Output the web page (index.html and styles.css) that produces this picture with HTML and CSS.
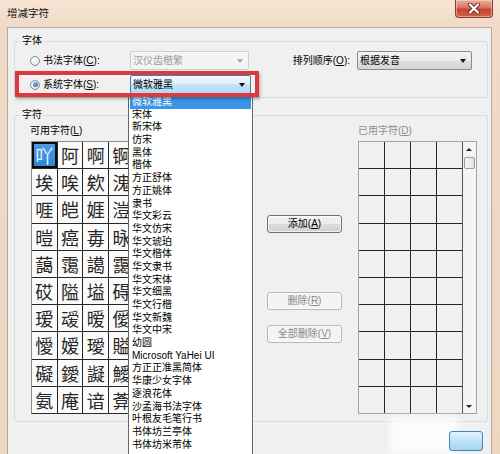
FILE: index.html
```html
<!DOCTYPE html>
<html lang="zh">
<head>
<meta charset="utf-8">
<title>增减字符</title>
<link rel="stylesheet" href="styles.css">
</head>
<body>
<div class="window">
  <div class="titlebar">
    <span class="title">增减字符</span>
    <span class="close">
      <svg width="14" height="11" viewBox="0 0 14 11">
        <path d="M3 1.5 L11 9.5 M11 1.5 L3 9.5" stroke="#6a2a1f" stroke-width="4" stroke-linecap="round"/>
        <path d="M3 1.5 L11 9.5 M11 1.5 L3 9.5" stroke="#ffffff" stroke-width="2.2" stroke-linecap="round"/>
      </svg>
    </span>
  </div>
  <div class="client">
    <fieldset class="group group-font">
      <legend>字体</legend>
      <div class="row">
        <label class="radio-label"><span class="radio"></span>书法字体(<u>C</u>):</label>
        <div class="combo combo-disabled"><span class="combo-text">汉仪齿楷繁</span><i class="arrow"></i></div>
        <div class="sort">
          <span>排列顺序(<u>O</u>):</span>
          <div class="combo combo-normal"><span class="combo-text">根据发音</span><i class="arrow"></i></div>
        </div>
      </div>
      <div class="row">
        <label class="radio-label"><span class="radio checked"></span>系统字体(<u>S</u>):</label>
        <div class="combo combo-focus"><span class="combo-text">微软雅黑</span><i class="arrow"></i></div>
      </div>
    </fieldset>

    <fieldset class="group group-chars">
      <legend>字符</legend>
      <div class="chars-body">
        <div class="panel panel-left">
          <div class="panel-label">可用字符(<u>L</u>)</div>
          <div class="grid grid-avail">
            <span class="cell sel">吖</span><span class="cell">阿</span><span class="cell">啊</span><span class="cell">锕</span>
            <span class="cell">埃</span><span class="cell">唉</span><span class="cell">欸</span><span class="cell">溾</span>
            <span class="cell">啀</span><span class="cell">皑</span><span class="cell">娾</span><span class="cell">溰</span>
            <span class="cell">暟</span><span class="cell">癌</span><span class="cell">毐</span><span class="cell">昹</span>
            <span class="cell">藹</span><span class="cell">霭</span><span class="cell">譪</span><span class="cell">靄</span>
            <span class="cell">砹</span><span class="cell">隘</span><span class="cell">塧</span><span class="cell">碍</span>
            <span class="cell">瑷</span><span class="cell">叆</span><span class="cell">暧</span><span class="cell">僾</span>
            <span class="cell">懓</span><span class="cell">嫒</span><span class="cell">璦</span><span class="cell">賹</span>
            <span class="cell">礙</span><span class="cell">鑀</span><span class="cell">譺</span><span class="cell">鱫</span>
            <span class="cell">氨</span><span class="cell">庵</span><span class="cell">谙</span><span class="cell">葊</span>
          </div>
        </div>

        <div class="buttons">
          <button class="btn btn-add">添加(<u>A</u>)</button>
          <button class="btn btn-del" disabled>删除(<u>R</u>)</button>
          <button class="btn btn-delall" disabled>全部删除(<u>V</u>)</button>
        </div>

        <div class="panel panel-right">
          <div class="panel-label muted">已用字符(<u>D</u>)</div>
          <div class="grid-box">
            <div class="grid grid-used">
              <span class="cell"></span><span class="cell"></span><span class="cell"></span><span class="cell"></span>
              <span class="cell"></span><span class="cell"></span><span class="cell"></span><span class="cell"></span>
              <span class="cell"></span><span class="cell"></span><span class="cell"></span><span class="cell"></span>
              <span class="cell"></span><span class="cell"></span><span class="cell"></span><span class="cell"></span>
              <span class="cell"></span><span class="cell"></span><span class="cell"></span><span class="cell"></span>
              <span class="cell"></span><span class="cell"></span><span class="cell"></span><span class="cell"></span>
              <span class="cell"></span><span class="cell"></span><span class="cell"></span><span class="cell"></span>
              <span class="cell"></span><span class="cell"></span><span class="cell"></span><span class="cell"></span>
              <span class="cell"></span><span class="cell"></span><span class="cell"></span><span class="cell"></span>
              <span class="cell"></span><span class="cell"></span><span class="cell"></span><span class="cell"></span>
            </div>
            <div class="vscroll">
              <i class="sb-up"></i>
              <span class="sb-thumb"></span>
              <span class="sb-fill"></span>
              <i class="sb-down"></i>
            </div>
          </div>
        </div>
      </div>
    </fieldset>
  </div>

  <ul class="dropdown">
    <li class="selected">微软雅黑</li>
    <li>宋体</li>
    <li>新宋体</li>
    <li>仿宋</li>
    <li>黑体</li>
    <li>楷体</li>
    <li>方正舒体</li>
    <li>方正姚体</li>
    <li>隶书</li>
    <li>华文彩云</li>
    <li>华文仿宋</li>
    <li>华文琥珀</li>
    <li>华文楷体</li>
    <li>华文隶书</li>
    <li>华文宋体</li>
    <li>华文细黑</li>
    <li>华文行楷</li>
    <li>华文新魏</li>
    <li>华文中宋</li>
    <li>幼圆</li>
    <li>Microsoft YaHei UI</li>
    <li>方正正准黑简体</li>
    <li>华康少女字体</li>
    <li>逐浪花体</li>
    <li>沙孟海书法字体</li>
    <li>叶根友毛笔行书</li>
    <li>书体坊兰亭体</li>
    <li>书体坊米芾体</li>
  </ul>

  <div class="annotation"></div>
  <div class="smudge"></div>
  <div class="ok-button"></div>
</div>
</body>
</html>
```

FILE: styles.css
```css
* { box-sizing: border-box; }

html, body {
  margin: 0;
  padding: 0;
}

body {
  width: 500px;
  height: 454px;
  overflow: hidden;
  font-family: "Liberation Sans", "Noto Sans CJK SC", sans-serif;
  font-size: 10px;
  color: #000;
  background: #efd7c2;
}

u { text-decoration: underline; text-underline-offset: 1px; }

.window {
  position: relative;
  width: 500px;
  height: 454px;
  display: flex;
  flex-direction: column;
  overflow: hidden;
  background: linear-gradient(#f7e4d4, #f0d9c5 28px, #eed6c1);
}

/* ---------- title bar ---------- */
.titlebar {
  flex: none;
  height: 27px;
  display: flex;
  justify-content: space-between;
  align-items: flex-start;
  padding: 0 7px 0 7px;
}

.title {
  margin-top: 7px;
  font-size: 10.5px;
  line-height: 12px;
  color: #111;
}

.close {
  width: 38px;
  height: 18px;
  display: flex;
  align-items: center;
  justify-content: center;
  border: 1px solid #8e3a2c;
  border-top: none;
  border-radius: 0 0 4px 4px;
  background: linear-gradient(#eab1a2, #d9735e 45%, #c7432f 55%, #d2614a);
  box-shadow: inset 0 0 0 1px rgba(255, 220, 210, 0.5);
}

/* ---------- client area ---------- */
.client {
  flex: 1;
  margin: 0 8px 0 7px;
  padding: 0 3px 0 6px;
  background: #f0f0f0;
  border: 1px solid #b5aa9f;
  border-bottom: none;
}

.group {
  margin: 0;
  padding: 0 15px;
  min-width: 0;
  border: 1px solid #d9dcdf;
  border-radius: 3px;
}

.group legend {
  padding: 0 2px;
  margin-left: -10px;
  font-size: 10px;
  line-height: 12px;
}

.group-font {
  margin-top: 7px;
  padding-top: 4px;
  padding-bottom: 3px;
}

.row {
  display: flex;
  align-items: center;
  height: 19px;
}

.row + .row { margin-top: 5px; }

.radio-label {
  width: 100px;
  display: flex;
  align-items: center;
  line-height: 12px;
}

.radio {
  width: 10px;
  height: 10px;
  margin-right: 3px;
  border: 1px solid #8a8a8a;
  border-radius: 50%;
  background: radial-gradient(circle at 40% 35%, #ffffff, #dcdcdc);
  display: flex;
  align-items: center;
  justify-content: center;
}

.radio.checked::after {
  content: "";
  width: 5px;
  height: 5px;
  border-radius: 50%;
  background: radial-gradient(circle at 40% 35%, #7fb6e8, #1f5a98);
}

.combo {
  position: relative;
  height: 19px;
  display: flex;
  align-items: center;
  padding-left: 2px;
  border: 1px solid #8e8f8f;
  border-radius: 2px;
  line-height: 12px;
}

.combo .arrow {
  position: absolute;
  right: 5px;
  top: 7px;
  width: 0;
  height: 0;
  border-left: 3.5px solid transparent;
  border-right: 3.5px solid transparent;
  border-top: 4px solid #111;
}

.combo-disabled {
  width: 119px;
  color: #9a9a9a;
  border-color: #cfcfcf;
  background: #f4f4f4;
}

.combo-disabled .arrow { border-top-color: #a8a8a8; }

.combo-normal {
  width: 115px;
  margin-left: 7px;
  background: linear-gradient(#f4f4f4, #ebebeb 50%, #dedede 50%, #d6d6d6);
  border-color: #8a8a8a;
}

.combo-focus {
  width: 121px;
  border-color: #3c7fb1;
  background: linear-gradient(#f1f8fd, #dff0fb 50%, #c3e4f7 50%, #b2dbf4);
}

.sort {
  margin-left: auto;
  display: flex;
  align-items: center;
  line-height: 12px;
}

/* ---------- characters group ---------- */
.group-chars {
  margin-top: 11px;
  padding-top: 4px;
  padding-right: 10px;
  padding-bottom: 7px;
}

.chars-body {
  display: flex;
  align-items: flex-start;
}

.chars-body > * { flex: none; }

.panel-label {
  line-height: 12px;
  height: 12px;
  margin-bottom: 4px;
}

.panel-label.muted { color: #8d8d8d; }

.panel-left { width: 121px; }

.grid {
  display: grid;
  gap: 1px;
  background: #262626;
}

.grid-avail {
  margin-left: 1px;
  grid-template-columns: repeat(4, 24.7px);
  grid-auto-rows: 26.2px;
  width: max-content;
  border: 1px solid #2a2a2a;
  border-left-color: #8c8c8c;
  border-top-color: #8c8c8c;
}

.grid-avail .cell {
  background: #fafafa;
  font-family: "Noto Sans CJK SC", sans-serif;
  font-size: 18px;
  line-height: 26px;
  text-align: center;
  color: #262626;
  overflow: hidden;
}

.grid-avail .cell.sel {
  background: linear-gradient(#4f9ee8, #2f82d6);
  color: #e4f2ff;
  box-shadow: inset 0 0 0 2px #0c0c0c;
}

.buttons {
  width: 75px;
  margin-left: 116px;
  display: flex;
  flex-direction: column;
}

.btn {
  width: 75px;
  height: 18px;
  padding: 0;
  font-family: "Liberation Sans", "Noto Sans CJK SC", sans-serif;
  font-size: 10px;
  line-height: 16px;
  color: #000;
  border: 1px solid #707070;
  border-radius: 3px;
  background: linear-gradient(#f3f3f3, #ebebeb 50%, #dddddd 50%, #cfcfcf);
  box-shadow: inset 0 0 0 1px rgba(255, 255, 255, 0.7);
}

.btn:disabled {
  color: #8a8a8a;
  border-color: #b4b8bb;
  background: #f4f4f4;
}

.btn-add { margin-top: 90px; }
.btn-del { margin-top: 59px; }
.btn-delall { margin-top: 15px; }

.panel-right { margin-left: 16px; }

.grid-box {
  display: flex;
  border: 1px solid #a3a3a3;
}

.grid-used {
  grid-template-columns: repeat(4, 24.9px);
  grid-auto-rows: 26.2px;
  border-right: 1px solid #555;
}

.grid-used .cell { background: #f0f0f0; }

.vscroll {
  width: 13px;
  display: flex;
  flex-direction: column;
  align-items: center;
  background: #f4f4f4;
}

.sb-up, .sb-down {
  width: 0;
  height: 0;
  border-left: 3px solid transparent;
  border-right: 3px solid transparent;
}

.sb-up {
  margin-top: 6px;
  border-bottom: 3px solid #222;
}

.sb-thumb {
  margin-top: 6px;
  width: 11px;
  height: 12px;
  border: 1px solid #9a9a9a;
  border-radius: 2px;
  background: linear-gradient(90deg, #f5f5f5, #e2e2e2);
}

.sb-fill { flex: 1; }

.sb-down {
  margin-bottom: 5px;
  border-top: 3px solid #222;
}

/* ---------- overlays ---------- */
.dropdown {
  position: absolute;
  left: 128px;
  top: 94px;
  width: 125px;
  height: 370px;
  margin: 0;
  padding: 1px;
  list-style: none;
  background: #fff;
  border: 1px solid #666;
}

.dropdown li {
  height: 12.7px;
  line-height: 12.7px;
  padding-left: 2px;
  font-size: 10px;
  white-space: nowrap;
  color: #000;
}

.dropdown li.selected {
  background: #3a95e8;
  color: #fff;
}

.annotation {
  position: absolute;
  left: 15px;
  top: 71px;
  width: 244px;
  height: 26px;
  border: 4px solid #dd3a3f;
  box-shadow: 1px 2px 3px rgba(0, 0, 0, 0.3);
}

.smudge {
  position: absolute;
  left: 390px;
  top: 417px;
  width: 68px;
  height: 37px;
  background: rgba(255, 255, 255, 0.8);
  filter: blur(3px);
}

.ok-button {
  position: absolute;
  left: 449px;
  top: 431px;
  width: 34px;
  height: 20px;
  border: 1px solid #3c86c4;
  border-radius: 3px;
  background: linear-gradient(#e3f3fd, #bfe3f8 50%, #a3d3f3);
}
```
